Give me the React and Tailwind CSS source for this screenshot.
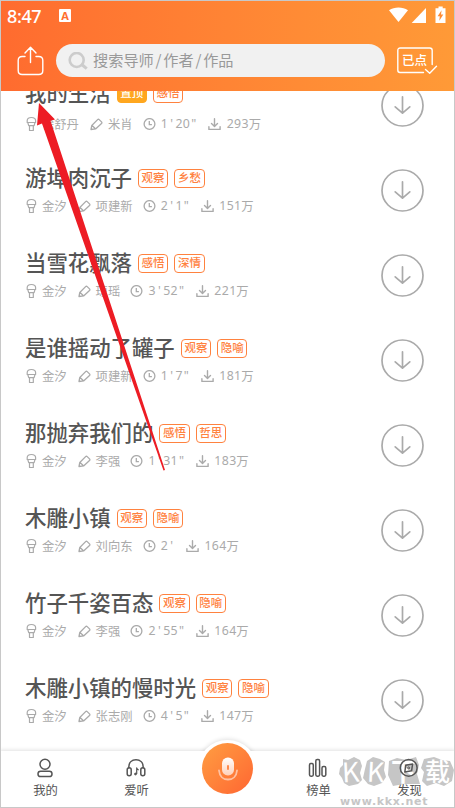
import clsx from 'clsx';

const tracks = [
  { title: '我的生活', tags: ['感悟'], pinned: true, reader: '徐舒丹', author: '米肖', time: '1\'20"', count: '293' },
  { title: '游埠肉沉子', tags: ['观察', '乡愁'], reader: '金汐', author: '项建新', time: '2\'1"', count: '151' },
  { title: '当雪花飘落', tags: ['感悟', '深情'], reader: '金汐', author: '琼瑶', time: '3\'52"', count: '221' },
  { title: '是谁摇动了罐子', tags: ['观察', '隐喻'], reader: '金汐', author: '项建新', time: '1\'7"', count: '181' },
  { title: '那抛弃我们的', tags: ['感悟', '哲思'], reader: '金汐', author: '李强', time: '1\'31"', count: '183' },
  { title: '木雕小镇', tags: ['观察', '隐喻'], reader: '金汐', author: '刘向东', time: "2'", count: '164' },
  { title: '竹子千姿百态', tags: ['观察', '隐喻'], reader: '金汐', author: '李强', time: '2\'55"', count: '164' },
  { title: '木雕小镇的慢时光', tags: ['观察', '隐喻'], reader: '金汐', author: '张志刚', time: '4\'5"', count: '147' },
];

const MicSmall = () => (
  <svg className="mr-[4px] h-[16px] w-[12px] shrink-0" viewBox="0 0 12 16" fill="none" stroke="currentColor" strokeWidth="1.2" strokeLinejoin="round">
    <path d="M2.2 6.5V4.6C2.2 2.4 3.900 1.500 6.400 1.500s4.200.9 4.200 3.100v1.900zM2.800 6.500l.9 3.200h5.400l.9-3.200M4.500 9.700v4.800h3.800V9.700" />
  </svg>
);

const Pencil = () => (
  <svg className="mr-[5px] h-[13px] w-[13px] shrink-0" viewBox="0 0 13 13" fill="none" stroke="currentColor" strokeWidth="1.3" strokeLinejoin="round" strokeLinecap="round">
    <path d="M1 11.500l.8-4L7.600 1.600q.8-.8 1.600 0l2.300 2.300q.8.8 0 1.600L5.600 10.900zM2 7.500l3.500 3.300" />
  </svg>
);

const Clock = () => (
  <svg className="mr-[5px] h-[13px] w-[13px] shrink-0" viewBox="0 0 13 13" fill="none" stroke="currentColor" strokeWidth="1.3">
    <circle cx="6.5" cy="6" r="5.4" />
    <path d="M6.300 3v3.700h2.600" />
  </svg>
);

const Download = () => (
  <svg className="mr-[5px] h-[13px] w-[13px] shrink-0" viewBox="0 0 13 13" fill="none" stroke="currentColor" strokeWidth="1.4" strokeLinecap="round" strokeLinejoin="round">
    <path d="M6.500.700v7.700M3.500 5.600l3 2.900 3-2.900M.900 8.700v2.700h11.200V8.700" />
  </svg>
);

const Digits = ({ text }) => (
  <span className="flex font-['Noto_Sans']">
    {text.split('').map((c, i) => (
      <span key={i} className="w-[7.4px] text-center">
        {c}
      </span>
    ))}
  </span>
);

const Tag = ({ children, solid }) => (
  <span
    className={clsx(
      'flex h-[19px] w-[30.3px] items-center justify-center rounded-[4px] border text-[11.5px] leading-none font-medium whitespace-nowrap',
      solid ? 'border-[#ffa71f] bg-[#ffa71f] text-white' : 'border-[#ff823f] text-[#ff823f]'
    )}
  >
    {children}
  </span>
);

const TrackRow = ({ track }) => (
  <li className="flex h-[85px] shrink-0 items-start justify-between pr-[31px] pl-[25px]">
    <div>
      <div className="flex h-[32px] items-center gap-[6px]">
        <h2 className="-mt-[2px] text-[21.4px] leading-[32px] font-medium whitespace-nowrap text-[#555]">{track.title}</h2>
        {track.pinned && <Tag solid>置顶</Tag>}
        {track.tags.map((tag) => (
          <Tag key={tag}>{tag}</Tag>
        ))}
      </div>
      <div className={clsx('flex h-[20px] items-center text-[12.3px] leading-none whitespace-nowrap text-[#aaa]', track.pinned ? 'mt-[5px]' : 'mt-[2px]')}>
        <MicSmall />
        <span className="ml-px">{track.reader}</span>
        <span className="ml-[11px] flex items-center">
          <Pencil />
          {track.author}
        </span>
        <span className="ml-[10px] flex items-center">
          <Clock />
          <Digits text={track.time} />
        </span>
        <span className="ml-[11px] flex items-center">
          <Download />
          <Digits text={track.count} />万
        </span>
      </div>
    </div>
    <button className="mt-[7px] h-[43px] w-[43px] text-[#aaa]" aria-label="下载">
      <svg viewBox="0 0 43 43" fill="none" stroke="currentColor" strokeWidth="1.7" strokeLinecap="round" strokeLinejoin="round">
        <circle cx="21.5" cy="21.5" r="20.5" />
        <path d="M21.5 12.8v16.4M14.2 22.8l7.3 6.4 7.3-6.4" />
      </svg>
    </button>
  </li>
);

const Header = () => (
  <header className="relative z-10 h-[91px] shrink-0 bg-gradient-to-r from-[#ff6b2f] via-[#ff8434] to-[#ff9a37] text-white">
    <div className="flex h-[31px] items-center pr-[8px] pl-[7px]">
      <span className="w-[35px] font-['Noto_Sans'] text-[18px] leading-none font-medium tracking-[-0.4px]">8:47</span>
      <span className="ml-[17px] flex h-[13px] w-[12px] items-center justify-center rounded-[1px] bg-white font-['Noto_Sans'] text-[11px] leading-none font-bold text-[#ff7030]">
        A
      </span>
      <svg className="-mt-[2px] ml-auto h-[18px] w-[58px]" viewBox="0 0 58 18" fill="currentColor">
        <path d="M0 4.2C5.5 .5 13.5.5 19 4.2L9.5 16z" />
        <path d="M37 2v15H22.7z" />
        <path d="M49.5.5h4.2v1.8h2.8V17h-10V2.3h3z" />
        <path d="M52.6 4.2l-4 6h2.2l-.5 4.6 4-6.2H52z" fill="#ff8c35" />
      </svg>
    </div>
    <div className="flex h-[59px] items-center">
      <svg className="ml-[17px] h-[30px] w-[28px]" viewBox="0 0 28 30" fill="none" stroke="currentColor" strokeWidth="1.4" strokeLinecap="round" strokeLinejoin="round">
        <path d="M8 10.500H5.200Q1.200 10.500 1.200 14.500v10q0 4 4 4h16.600q4 0 4-4v-10q0-4-4-4H19M13.500 16.500V1.500M8 7l5.500-5.800L19 7" />
      </svg>
      <div className="ml-[11px] flex h-[33px] w-[329px] items-center rounded-full bg-[#f1f1f1] pl-[12px] text-[#999]">
        <svg className="h-[18px] w-[20px]" viewBox="0 0 20 18" fill="none" stroke="#ccc" strokeWidth="2.6">
          <circle cx="8.7" cy="8" r="7" />
          <path d="M13.700 12.500l5 4.200" strokeWidth="3" />
        </svg>
        <span className="-mt-px ml-[5px] flex text-[15.2px] leading-none">
          搜索导师<i className="w-[9.5px] text-center not-italic">/</i>作者<i className="w-[9.5px] text-center not-italic">/</i>作品
        </span>
      </div>
      <div className="relative ml-[12px] h-[28px] w-[41px]">
        <svg className="h-full w-full" viewBox="0 0 41 28" fill="none" stroke="currentColor" strokeWidth="1.4" strokeLinecap="round" strokeLinejoin="round">
          <path d="M26.500 25.500H3Q.800 25.500.800 23V3.500Q.800 1 3.300 1h29.400q2.500 0 2.500 2.500v14M28.500 22.500l4.200 3.800 6.800-7" />
        </svg>
        <span className="absolute top-[6px] left-[5px] text-[12.5px] leading-[13px] font-medium">已点</span>
      </div>
    </div>
  </header>
);

const navIcons = {
  我的: (
    <>
      <circle cx="10" cy="6.3" r="5" />
      <rect x="3" y="13.2" width="14" height="5.3" rx="2.6" />
    </>
  ),
  爱听: (
    <>
      <path d="M2.8 10.5V9C2.8 4.5 5.7 1.7 10 1.7s7.2 2.8 7.2 7.3v1.5" />
      <rect x="1.2" y="9.7" width="4" height="8" rx="2" />
      <rect x="14.8" y="9.7" width="4" height="8" rx="2" />
      <path d="M10.7 16V9.8q.3 1.800 2 2.100" strokeWidth="1.2" />
      <circle cx="9.5" cy="16" r="1" fill="currentColor" strokeWidth=".8" />
    </>
  ),
  榜单: (
    <>
      <rect x="1.5" y="5.5" width="3.8" height="12.7" rx="1.4" />
      <rect x="7.800" y="1.500" width="3.8" height="16.700" rx="1.4" />
      <rect x="14" y="8.5" width="3.8" height="9.7" rx="1.4" />
    </>
  ),
  发现: (
    <>
      <circle cx="9.7" cy="9.9" r="8.4" />
      <path d="M5.800 14l1-6.800 6.800-1.200-1 6.800z" />
      <circle cx="9.7" cy="9.9" r="1" strokeWidth="1" />
    </>
  ),
};

const NavItem = ({ label }) => (
  <a className="relative z-20 flex flex-1 flex-col items-center pt-[7px] text-[#555]">
    <svg className="-ml-px h-[20px] w-[20px]" viewBox="0 0 20 20" fill="none" stroke="currentColor" strokeWidth="1.5" strokeLinejoin="round">
      {navIcons[label]}
    </svg>
    <span className="mt-[6px] text-[12.3px] leading-[13px]">{label}</span>
  </a>
);

const Watermark = () => (
  <div className="absolute top-[5px] right-0 h-[51px] w-[117px] text-[#c6c6c6]">
    <svg className="h-full w-full" viewBox="0 0 117 51" fill="currentColor">
      <path d="M5 3L10 4 16 1 22 4 24 10 22 17 24 24 20 28 11 30 6 27 4 22 1 18 2 12 5 9z" />
      <path d="M29 5L35 1 42 3 47 6 46 14 48 21 44 27 36 30 30 28 25 22 27 13z" />
      <path d="M51 5L59 2 68 4 78 1 81 9 79 18 82 28 66 28 55 30 50 19z" />
      <path d="M86 3L96 1 104 4 112 5 116 14 114 25 106 30 98 27 89 30 84 25 86 16 83 12z" />
    </svg>
    <span className="absolute top-[2px] left-[4px] -rotate-3 text-[27px] leading-[26px] text-white">K</span>
    <span className="absolute top-[2px] left-[29px] rotate-3 text-[27px] leading-[26px] text-white">K</span>
    <span className="absolute top-[2px] left-[53px] text-[25px] leading-[25px] font-bold text-white">下</span>
    <span className="absolute top-[2px] left-[87px] text-[25px] leading-[25px] font-medium text-white">载</span>
    <span className="absolute top-[39px] left-[2px] font-['DejaVu_Sans'] text-[11px] leading-[13px] font-bold tracking-[0.7px]">www.kkx.net</span>
  </div>
);

const BottomNav = () => (
  <nav className="relative z-10 h-[57px] shrink-0 bg-white shadow-[0_-1px_4px_rgba(0,0,0,0.12)]">
    {/* Raised bump behind the record button */}
    <div className="absolute top-[-11px] left-[197px] h-[61px] w-[61px] rounded-full bg-white shadow-[0_-1px_4px_rgba(0,0,0,0.12)]" />
    <div className="absolute inset-0 bg-white" />
    <Watermark />
    <div className="relative flex h-full">
      <NavItem label="我的" />
      <NavItem label="爱听" />
      <div className="relative z-10 flex-1">
        <button className="absolute top-[-8px] left-[20px] flex h-[51px] w-[51px] items-center justify-center rounded-full bg-gradient-to-br from-[#ff9d42] to-[#ff6532]" aria-label="录音">
          <svg className="h-[24px] w-[20px]" viewBox="0 0 20 24" fill="none">
            <defs>
              <linearGradient id="mic" x1="0" y1="0" x2="0" y2="1">
                <stop offset="0" stopColor="#fff" />
                <stop offset="1" stopColor="#ffd0b8" />
              </linearGradient>
            </defs>
            <rect x="4" y=".5" width="12" height="18" rx="5.8" fill="url(#mic)" />
            <path d="M1 13.500c.5 5.500 4 9 9 9s8.500-3.500 9-9" stroke="#ffc2a3" strokeWidth="1.8" strokeLinecap="round" />
            <rect x="9" y="8" width="2" height="5" rx="1" fill="#ff8a4c" />
          </svg>
        </button>
      </div>
      <NavItem label="榜单" />
      <NavItem label="发现" />
    </div>
  </nav>
);

export default function App() {
  return (
    <div className="relative flex h-[808px] w-[455px] flex-col overflow-hidden bg-white font-['Noto_Sans_CJK_SC',sans-serif]">
      <Header />
      <main className="h-[660px] shrink-0">
        <ul className="-mt-[14px] flex flex-col">
          {tracks.map((track) => (
            <TrackRow key={track.title} track={track} />
          ))}
        </ul>
      </main>
      <BottomNav />
      <svg className="pointer-events-none absolute top-0 left-0 z-20 h-full w-full" viewBox="0 0 455 808">
        <path d="M39 103L55 119.500 50.500 120.800 165 470 163.500 470.500 42 123.500 37 125.500z" fill="#ed1c24" />
      </svg>
      {/* Frame */}
      <div className="pointer-events-none absolute inset-0 z-30 border border-[#c8c8c8]" />
    </div>
  );
}
